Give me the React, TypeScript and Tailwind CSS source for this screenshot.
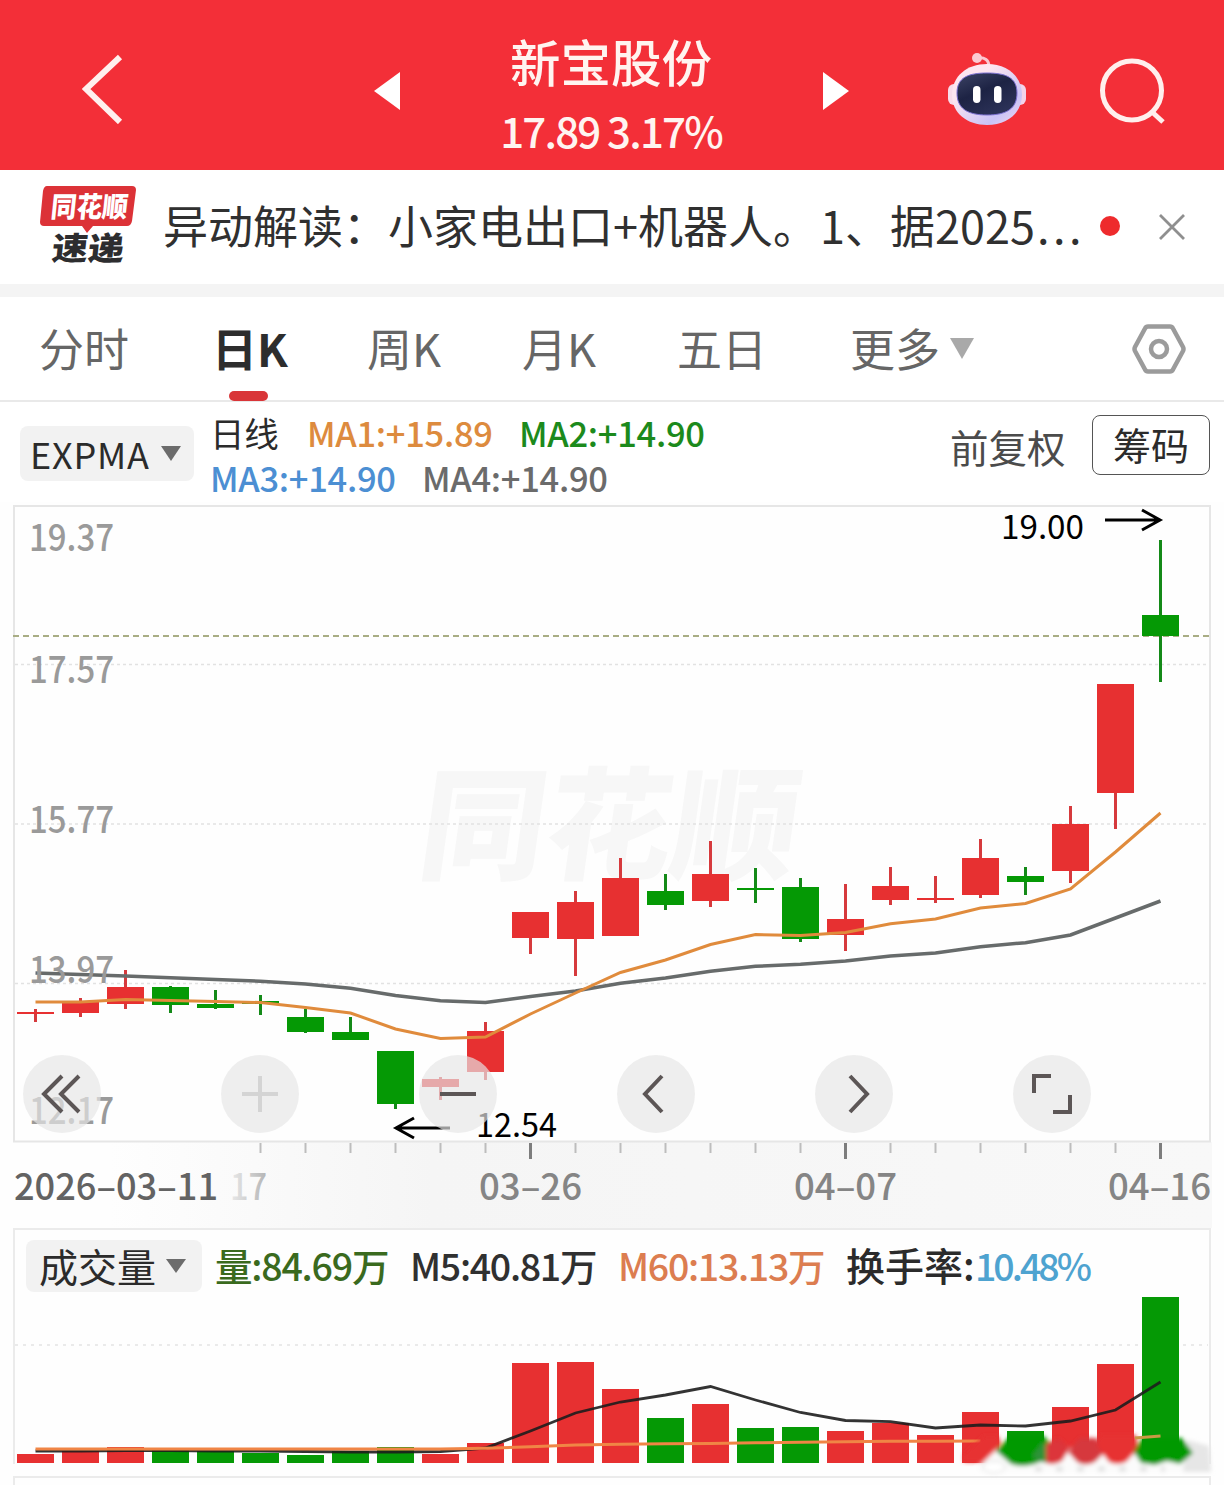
import React from "react";

const RED = "#e73031";
const GREEN = "#059905";

// first candle centre and distance between candles
const X0 = 35.5;
const STEP = 45;
const cx = (i: number) => X0 + STEP * i;

// [up, body top, body bottom, wick top, wick bottom]
const candles: [number, number, number, number, number][] = [
  [1, 1012, 1014, 1009, 1022],
  [1, 1002, 1013, 998, 1017],
  [1, 987, 1004, 970, 1009],
  [0, 987, 1005, 986, 1013],
  [0, 1004, 1008, 990, 1009],
  [0, 1001, 1004, 995, 1015],
  [0, 1017, 1032, 1009, 1033],
  [0, 1032, 1040, 1017, 1040],
  [0, 1051, 1104, 1051, 1109],
  [1, 1079, 1087, 1077, 1100],
  [1, 1031, 1072, 1022, 1080],
  [1, 912, 938, 912, 954],
  [1, 902, 939, 891, 976],
  [1, 878, 936, 858, 936],
  [0, 891, 905, 874, 910],
  [1, 874, 901, 841, 907],
  [0, 888, 890, 868, 903],
  [0, 887, 939, 878, 942],
  [1, 919, 935, 884, 951],
  [1, 886, 900, 867, 905],
  [1, 898, 900, 876, 903],
  [1, 858, 895, 839, 898],
  [0, 876, 882, 867, 895],
  [1, 824, 871, 806, 883],
  [1, 684, 793, 684, 829],
  [0, 615, 636, 540, 682],
];

const ma1 = [1002, 1002, 999.5, 1000.5, 1001.5, 1002.5, 1007.5, 1013, 1029, 1038.5, 1037, 1014, 993, 972.5, 960, 944.5, 934.5, 935.5, 932.5, 923.7, 919, 908, 903.5, 889, 852, 813];
const ma4 = [973, 974.5, 976, 977.7, 979.5, 981.3, 984, 988.3, 995.5, 1000.7, 1002.5, 996.5, 991, 983.3, 978, 971.3, 966.3, 964.3, 961, 956, 953, 946.7, 942.7, 935, 918, 901];

const volumes = [1454, 1451, 1447, 1450, 1451, 1453, 1455, 1451, 1447, 1454, 1443, 1363, 1362, 1389, 1418, 1404, 1428, 1427, 1431, 1423, 1435, 1412, 1431, 1407, 1364, 1297];
const m5 = [1451, 1451, 1450.5, 1450.5, 1451, 1451, 1451.5, 1452, 1452, 1451.5, 1448, 1431, 1413, 1402, 1395, 1386.5, 1400, 1412.5, 1420.5, 1421.7, 1428, 1425, 1426, 1421, 1410, 1382];
const m60 = [1449, 1449, 1449, 1449, 1449, 1449, 1449, 1449, 1449, 1449, 1448.3, 1446.7, 1445, 1444.3, 1443.8, 1443.4, 1442.8, 1442.2, 1441.7, 1441.2, 1441.2, 1441];

const line = (ys: number[]) => ys.map((y, i) => `${cx(i)},${y}`).join(" ");

const prices: [string, number][] = [
  ["19.37", 551],
  ["17.57", 683],
  ["15.77", 833],
  ["13.97", 983],
  ["12.17", 1124],
];

const tabs = [
  { name: "分时", width: "w-[173px]" },
  { name: "日K", width: "w-[155px]", active: true },
  { name: "周K", width: "w-[155px]" },
  { name: "月K", width: "w-[155px]" },
  { name: "五日", width: "w-[173px]" },
  { name: "更多", width: "w-[91px]" },
];

function Robot() {
  return (
    <svg width="80" height="74" viewBox="0 0 80 74">
      <defs>
        <linearGradient id="head" x1="0" y1="0" x2="1" y2="1">
          <stop offset="0.3" stopColor="#fde6f0" />
          <stop offset="0.75" stopColor="#c9c2f6" />
          <stop offset="1" stopColor="#f3d9f2" />
        </linearGradient>
        <linearGradient id="face" x1="0" y1="0" x2="0.6" y2="1">
          <stop offset="0" stopColor="#3c4365" />
          <stop offset="0.5" stopColor="#1d2344" />
          <stop offset="1" stopColor="#2b3157" />
        </linearGradient>
      </defs>
      <path d="M30 6c8-1 12 2 12 9" fill="none" stroke="#fbc5cf" strokeWidth="3" />
      <circle cx="30" cy="6" r="5" fill="#fcc9d2" />
      <rect x="1" y="32" width="14" height="21" rx="6" fill="#f8dcea" />
      <rect x="65" y="32" width="14" height="21" rx="6" fill="#f3d3ea" />
      <path d="M40 12c20 0 35 12 35 31 0 18-15 30-35 30S5 61 5 43c0-19 15-31 35-31z" fill="url(#head)" />
      <path d="M40 21c18 0 30 4 30 20 0 16-11 22-30 22S10 57 10 41c0-16 12-20 30-20z" fill="url(#face)" stroke="#7a6fd0" strokeWidth="1" />
      <rect x="26" y="34" width="7.500" height="17" rx="3.700" fill="#fff" />
      <rect x="47" y="34" width="7.500" height="17" rx="3.700" fill="#fff" />
    </svg>
  );
}

function Header() {
  return (
    <header className="flex h-[170px] items-start bg-[#f32f38] text-white">
      <svg className="mt-[54px] ml-[82px]" width="42" height="70" viewBox="0 0 42 70">
        <path d="M38 3L4 35l34 33" fill="none" stroke="#fff0ee" strokeWidth="6" />
      </svg>
      <svg className="mt-[72px] ml-[250px]" width="26" height="38" viewBox="0 0 26 38">
        <path d="M26 0v38L0 19z" fill="#fff" />
      </svg>
      <div className="ml-[71px] flex w-[280px] flex-col items-center whitespace-nowrap">
        <h1 className="mt-[30px] text-[50.5px] leading-[60px] font-medium text-[#fff4f0]">新宝股份</h1>
        <p className="mt-[15px] text-[42px] leading-[50px] font-medium tracking-[-1.800px] text-[#fff4f0]">17.89 3.17%</p>
      </div>
      <svg className="mt-[72px] ml-[72px]" width="26" height="38" viewBox="0 0 26 38">
        <path d="M0 0v38l26-19z" fill="#fff" />
      </svg>
      <div className="mt-[52px] ml-[98px]">
        <Robot />
      </div>
      <svg className="mt-[57px] ml-[71px]" width="70" height="70" viewBox="0 0 70 70">
        <circle cx="34" cy="33.500" r="29.500" fill="none" stroke="#ffefed" strokeWidth="5" />
        <path d="M53 54l12 11" stroke="#ffefed" strokeWidth="5" />
      </svg>
    </header>
  );
}

function News() {
  return (
    <div className="flex h-[114px] items-start bg-white">
      <svg className="mt-[15px] ml-10 shrink-0 overflow-visible" width="97" height="90" viewBox="40 185 97 90">
        <path d="M47 186h85q4 0 4 4l-4 31q-1 5-5 5H93l-6 7-5-7H44q-4 0-4-4l3-31q1-5 4-5z" fill="#dc3237" />
        <g transform="translate(50 217) skewX(-6)">
          <text fontSize="28" fontWeight="900" fill="#fff" textLength="77" lengthAdjust="spacingAndGlyphs">同花顺</text>
        </g>
        <g transform="translate(51 260) skewX(-6)">
          <text fontSize="32" fontWeight="900" fill="#2d2d2f" textLength="72" lengthAdjust="spacingAndGlyphs">速递</text>
        </g>
      </svg>
      <p className="mt-[25px] ml-[26px] w-[920px] text-[45px] leading-[60px] whitespace-nowrap text-[#303030]">
        异动解读：小家电出口+机器人。<span className="ml-[2px]">1、据2025</span>
        <span className="ml-[2px] tracking-[3.500px]">...</span>
      </p>
      <span className="mt-[46px] ml-[17px] h-[20px] w-[20px] rounded-full bg-[#ee2b2d]" />
      <svg className="mt-[43px] ml-[38px]" width="28" height="28" viewBox="0 0 28 28">
        <path d="M2 2l24 24M26 2L2 26" stroke="#8f8f8f" strokeWidth="2.800" />
      </svg>
    </div>
  );
}

function Tabs() {
  return (
    <nav className="flex h-[105px] border-b-2 border-[#e9e9e9] bg-white pl-[39px] text-[45px] leading-[60px] text-[#666]">
      {tabs.map((t) => (
        <div key={t.name} className={t.width}>
          <div className={t.active ? "mt-[21px] font-bold text-[#2d2d2d]" : "mt-[21px]"}>{t.name}</div>
          {t.active && <div className="mt-[13px] ml-[17px] h-[10px] w-[39px] rounded-full bg-[#d93538]" />}
        </div>
      ))}
      <svg className="mt-[41px] ml-[9px]" width="24" height="21" viewBox="0 0 24 21">
        <path d="M0 0h24L12 21z" fill="#a9a9a9" />
      </svg>
      <svg className="mt-[26px] ml-[158px]" width="54" height="52" viewBox="0 0 54 52">
        <path d="M16 3.500h22q2 0 3 2l10 18.500q1 2 0 4L41 46.500q-1 2-3 2H16q-2 0-3-2L3 28q-1-2 0-4L13 5.500q1-2 3-2z" fill="none" stroke="#9b9b9b" strokeWidth="4.500" />
        <circle cx="27" cy="26" r="8" fill="none" stroke="#9b9b9b" strokeWidth="4.500" />
      </svg>
    </nav>
  );
}

function Indicators() {
  return (
    <div className="flex h-[100px] items-start bg-white whitespace-nowrap">
      <div className="mt-[24px] ml-5 flex h-[55px] w-[174px] items-center rounded-lg bg-[#f2f2f2] pl-[10px] text-[36px] text-[#2b2b2b]">
        <span className="-mt-[2px] w-[131px] tracking-[0.800px]">EXPMA</span>
        <svg width="20" height="15" viewBox="0 0 20 15">
          <path d="M0 0h20L10 15z" fill="#6c6c6c" />
        </svg>
      </div>
      <div className="mt-[8px] ml-[16px] w-[740px] text-[34.500px] leading-[45px] font-medium tracking-[-0.300px]">
        <div className="flex">
          <span className="w-[97px] font-normal text-[#2b2b2b]">日线</span>
          <span className="w-[212px] text-[#dd8b3e]">MA1:+15.89</span>
          <span className="text-[#1c8a1c]">MA2:+14.90</span>
        </div>
        <div className="flex">
          <span className="w-[212px] text-[#4c8fd3]">MA3:+14.90</span>
          <span className="text-[#6b6b6b]">MA4:+14.90</span>
        </div>
      </div>
      <span className="mt-[16px] w-[142px] text-[38.500px] leading-[56px] text-[#4b4b4b]">前复权</span>
      <button className="mt-[13px] flex h-[60px] w-[118px] items-center justify-center rounded-lg border-[1.500px] border-[#555] pb-[3px] text-[38px] text-[#2b2b2b]">
        筹码
      </button>
    </div>
  );
}

const round = "flex h-[78px] w-[78px] items-center justify-center rounded-full bg-[#e6e6e6]/67";

// floating zoom and scroll buttons
function Controls() {
  return (
    <div className="absolute top-[553px] left-[23px] flex gap-[120px]">
      {[
        "M39 21L21 39l18 18M56 21L38 39l18 18",
        "M21 39h36M39 21v36",
        "M21 39h36",
        "M45 21L28 39l17 18",
        "M35 21l17 18-17 18",
        "M38 21H21v17M40 57h17V40",
      ].map((d, i) => (
        <button key={d} className={round}>
          <svg width="78" height="78" viewBox="0 0 78 78">
            <path d={d} fill="none" stroke={i === 1 ? "#d4d4d4" : "#5c5656"} strokeWidth="4" />
          </svg>
        </button>
      ))}
    </div>
  );
}

function KChart() {
  return (
    <div className="relative h-[726px]">
      <svg className="block" width="1224" height="726" viewBox="0 502 1224 726">
        <defs>
          <linearGradient id="strip" x1="0" x2="1" y1="0" y2="0">
            <stop offset="0.080" stopColor="#f5f5f5" stopOpacity="0" />
            <stop offset="0.350" stopColor="#f5f5f5" />
            <stop offset="1" stopColor="#f8f8f8" />
          </linearGradient>
          <linearGradient id="fade" x1="0" x2="1" y1="0" y2="0">
            <stop offset="0" stopColor="#e9e9e9" />
            <stop offset="1" stopColor="#b5b5b5" />
          </linearGradient>
        </defs>
        <g transform="translate(415 870) skewX(-8)">
          <text fontSize="122" fontWeight="900" fill="#f7f7f7" textLength="378" lengthAdjust="spacingAndGlyphs">同花顺</text>
        </g>
        <rect x="14" y="1142" width="1198" height="86" fill="url(#strip)" />
        <rect x="14" y="506" width="1196" height="635.500" fill="none" stroke="#e6e6e6" strokeWidth="2" />
        {[664.5, 824, 983.5].map((y) => (
          <path key={y} d={`M15 ${y}H1209`} stroke="#e2e2e2" strokeWidth="1.500" strokeDasharray="3 3" />
        ))}
        <path d="M13 636H1211" stroke="#a9ad84" strokeWidth="1.800" strokeDasharray="6 4" />

        {candles.map(([up, top, bottom, high, low], i) => (
          <g key={i} fill={up ? RED : GREEN}>
            <rect x={cx(i) - 1.5} y={high} width="3" height={low - high} fill={up ? "#d63a3d" : "#148a18"} />
            <rect x={cx(i) - 18.5} y={top} width="37" height={bottom - top} />
          </g>
        ))}
        <polyline points={line(ma4)} fill="none" stroke="#676b6b" strokeWidth="3.500" />
        <polyline points={line(ma1)} fill="none" stroke="#e08b3c" strokeWidth="3" />

        {prices.map(([p, y]) => (
          <text key={p} x="29" y={y} fontSize="37" fontWeight="500" fill="#9a9a9a" textLength="85" lengthAdjust="spacingAndGlyphs">{p}</text>
        ))}

        <g fill="none" stroke="#000" strokeWidth="3">
          <path d="M1105 520h54M1142 510l18 10-18 10" />
          <path d="M450 1128h-53M414 1118l-18 10 18 10" />
        </g>
        <text x="1001" y="539" fontSize="33" textLength="83" lengthAdjust="spacingAndGlyphs">19.00</text>
        <text x="476" y="1137" fontSize="33" textLength="81" lengthAdjust="spacingAndGlyphs">12.54</text>

        {Array.from({ length: 21 }, (_, k) => k + 5).map((i) => {
          const major = i === 11 || i === 18 || i === 25;
          return <rect key={i} x={cx(i) - (major ? 1.5 : 1)} y="1143" width={major ? 3 : 2} height={major ? 16 : 10} fill={major ? "#7d7d7d" : "#bdbdbd"} />;
        })}
        <g fontSize="37" fontWeight="500" fill="#858585">
          <text x="14" y="1200" fill="#636363" textLength="204" lengthAdjust="spacingAndGlyphs">2026–03–11</text>
          <text x="230" y="1200" fill="url(#fade)" textLength="37" lengthAdjust="spacingAndGlyphs">17</text>
          <text x="479" y="1200" textLength="103" lengthAdjust="spacingAndGlyphs">03–26</text>
          <text x="794" y="1200" textLength="103" lengthAdjust="spacingAndGlyphs">04–07</text>
          <text x="1108" y="1200" textLength="103" lengthAdjust="spacingAndGlyphs">04–16</text>
        </g>
      </svg>
      <Controls />
    </div>
  );
}

function Volume() {
  return (
    <div className="mx-[13px] h-[236px] border-x-2 border-t-2 border-[#ebebeb]">
      <div className="flex h-[66px] items-start text-[37.500px] leading-[52px] font-medium whitespace-nowrap">
        <div className="mt-[10px] ml-[11px] flex h-[52px] w-[176px] items-center rounded-lg bg-[#f2f2f2] pl-[13px] text-[39px] font-normal text-[#2b2b2b]">
          <span className="-mt-[3px] w-[127px]">成交量</span>
          <svg width="20" height="14" viewBox="0 0 20 14">
            <path d="M0 0h20L10 14z" fill="#6c6c6c" />
          </svg>
        </div>
        <span className="mt-[9px] ml-[13px] w-[195px] tracking-[-1.200px] text-[#3a6a1e]">量:84.69万</span>
        <span className="mt-[9px] w-[208px] tracking-[-1.300px] text-[#303030]">M5:40.81万</span>
        <span className="mt-[9px] w-[228px] tracking-[-1.300px] text-[#dc7d50]">M60:13.13万</span>
        <span className="mt-[8px] w-[129px] text-[39px] text-[#2b2b2b]">换手率:</span>
        <span className="mt-[9px] tracking-[-3px] text-[#4ea3d0]">10.48%</span>
      </div>
      <svg className="block overflow-visible" width="1192" height="168" viewBox="15 1296 1192 168">
        <defs>
          <filter id="soft" x="-20%" y="-50%" width="140%" height="200%">
            <feGaussianBlur stdDeviation="2" />
          </filter>
        </defs>
        <path d="M15 1345H1208" stroke="#e4e4e4" strokeWidth="1.500" strokeDasharray="3 5" />
        {volumes.map((y, i) => (
          <rect key={i} x={cx(i) - 18.5} y={y} width="37" height={1463 - y} fill={candles[i][0] ? RED : GREEN} />
        ))}
        <polyline points={line(m5)} fill="none" stroke="#1d1d1d" strokeOpacity="0.900" strokeWidth="2.800" />
        <polyline points={line(m60)} fill="none" stroke="#f08545" strokeWidth="3" />

        {/* smudged strip at the right end */}
        <g filter="url(#soft)">
          <path d="M978 1467l20-19h190l20 18v6H978z" fill="#fbfbfb" />
          <path d="M1187 1440l22 6 2 26h-28z" fill="#e6e6e6" />
          <path d="M984 1436h14l3 8-18 18h-19v-8z" fill={RED} />
          <path d="M996 1451l14-15h34l12 14-14 11q-16 8-31 3z" fill={GREEN} />
          <path d="M1032 1456l10-13 10 3v16q-10 3-20-6z" fill="#2f9238" />
          <path d="M1046 1444l12-6 12 10-8 13q-8 5-16 2z" fill="#dc353a" />
          <path d="M1068 1452l12-14h16l9 14-10 10q-10 5-18 0z" fill="#d6383d" />
          <path d="M1097 1446l3-11h36l2 14-12 13q-9 4-17 0z" fill={RED} />
          <path d="M1134 1452l8-14h40l11 15-13 11-13-3-12 4-14-2z" fill={GREEN} />
          <ellipse cx="994" cy="1467" rx="11" ry="6" fill="#fff" stroke="#d5d5d5" />
          <path d="M1035 1469h130" stroke="#e2e2e2" strokeWidth="5" strokeDasharray="7 14" />
        </g>
        <path d="M1135 1438l25.500-2" stroke="#c89a45" strokeWidth="3" />
      </svg>
    </div>
  );
}

export default function App() {
  return (
    <div className="h-[1485px] w-[1224px] overflow-hidden bg-[#fefefe] font-['Noto_Sans_CJK_SC',sans-serif]">
      <Header />
      <News />
      <div className="h-[13px] bg-[#f4f4f4]" />
      <Tabs />
      <Indicators />
      <KChart />
      <Volume />
      <div className="mx-[13px] mt-3 h-4 border-x-2 border-t-2 border-[#ebebeb]" />
    </div>
  );
}
